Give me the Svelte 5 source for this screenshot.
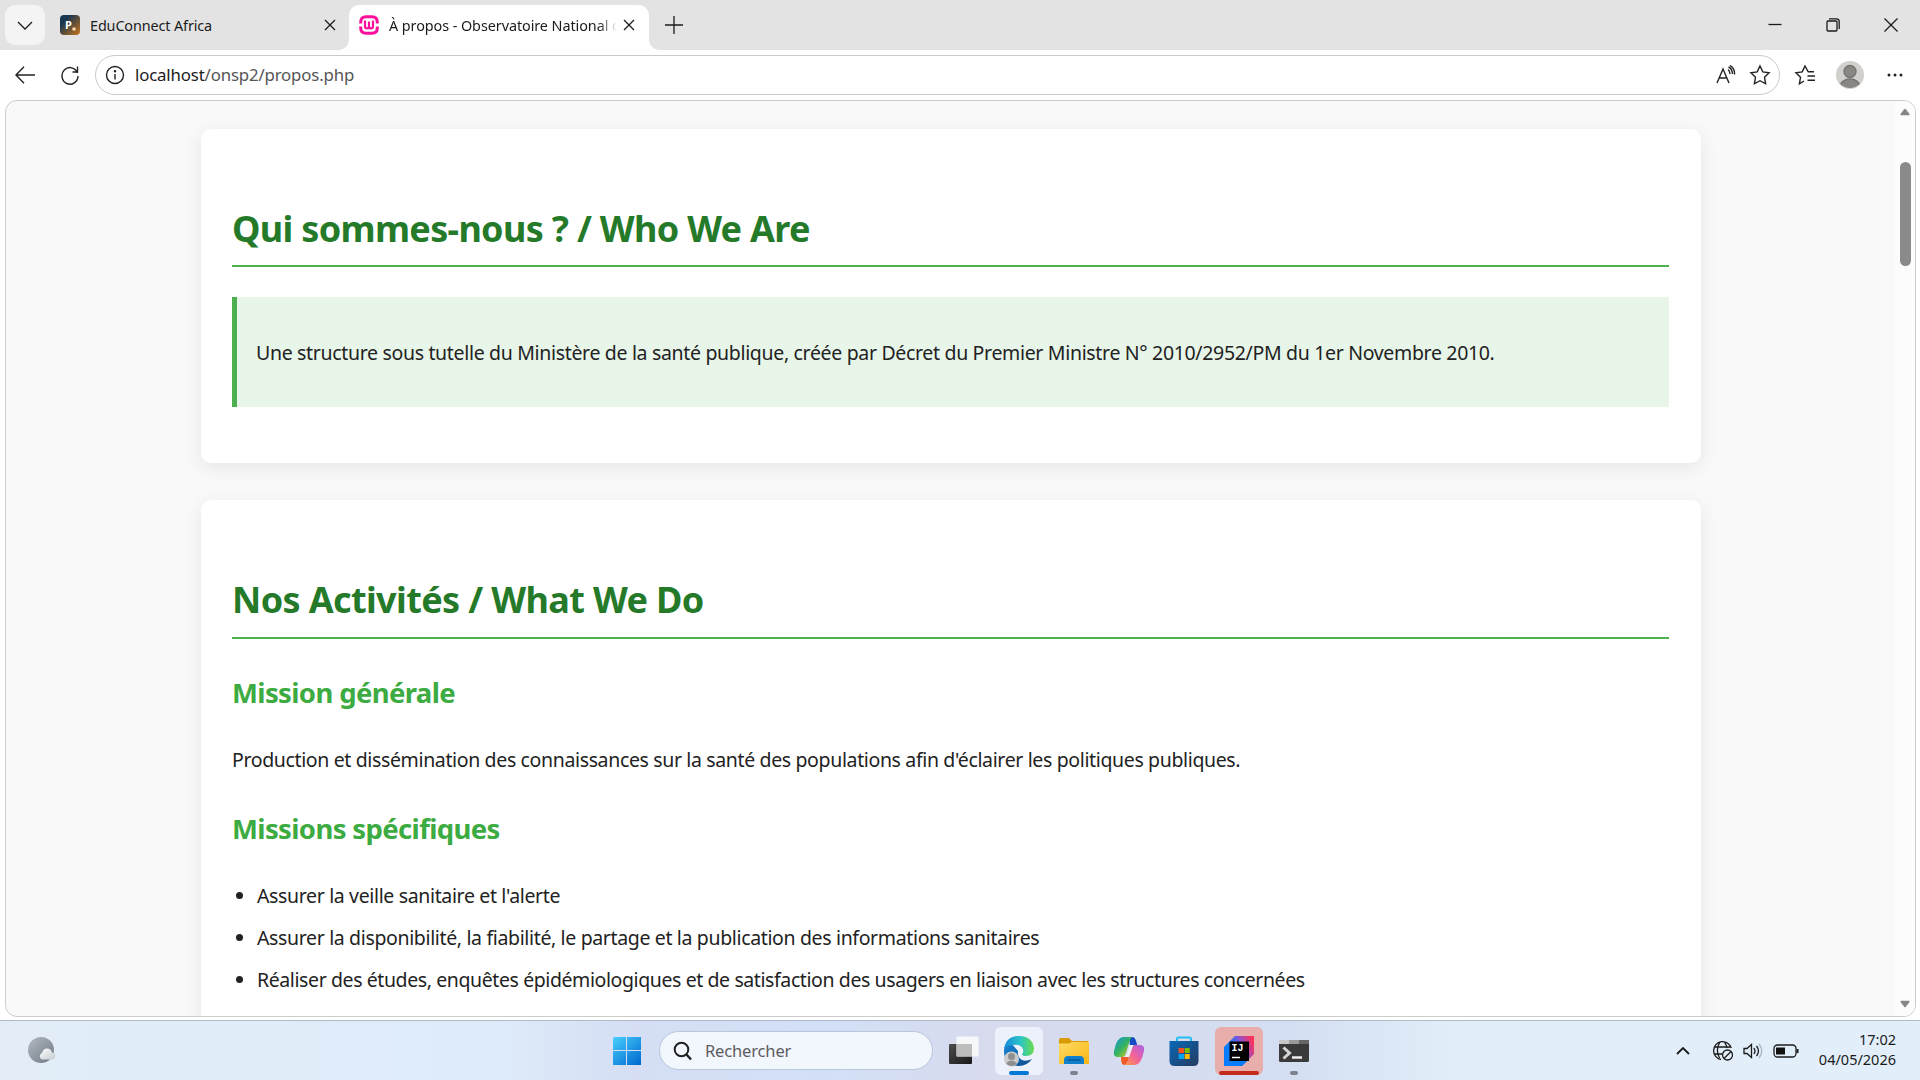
<script lang="ts">
  const missions = [
    "Assurer la veille sanitaire et l'alerte",
    "Assurer la disponibilité, la fiabilité, le partage et la publication des informations sanitaires",
    "Réaliser des études, enquêtes épidémiologiques et de satisfaction des usagers en liaison avec les structures concernées",
    "Coordonner les fonctions de collecte et de diffusion des données"
  ];
</script>

<div class="screen">
  <header class="tabstrip">
    <button class="tab-menu" aria-label="Tabs">
      <svg width="18" height="18" viewBox="0 0 18 18"><path d="M2 6l7 7 7-7" /></svg>
    </button>
    <div class="tab">
      <svg class="favicon" width="20" height="20" viewBox="0 0 20 20">
        <defs><linearGradient id="edu" x1="0" y1="0" x2="1" y2="1"><stop offset=".25" stop-color="#173650" /><stop offset="1" stop-color="#c8741c" /></linearGradient></defs>
        <rect width="20" height="20" rx="4" fill="url(#edu)" />
        <text x="5" y="14" class="fav-letter">P</text>
        <circle cx="14" cy="14" r="1.8" fill="#ffd9a8" />
      </svg>
      <span class="title">EduConnect Africa</span>
      <svg class="close" width="12" height="12" viewBox="0 0 12 12"><path d="M1 1l10 10M11 1L1 11" /></svg>
    </div>
    <div class="tab active">
      <svg class="favicon wamp" width="20" height="20" viewBox="0 0 20 20">
        <path class="ring" d="M1.700 8.500V7q0-5.300 5.300-5.300h6q5.300 0 5.300 5.300v1.500M1.700 11.500V13q0 5.300 5.300 5.300h6q5.300 0 5.300-5.300v-1.500" />
        <path class="w" d="M6 5.500V11q0 2.500 2 2.500t2-2.500V6.500V11q0 2.500 2 2.500t2-2.500V5.500" />
      </svg>
      <span class="title long">À propos - Observatoire National de la Santé</span>
      <svg class="close" width="12" height="12" viewBox="0 0 12 12"><path d="M1 1l10 10M11 1L1 11" /></svg>
    </div>
    <button class="new-tab" aria-label="New tab">
      <svg width="18" height="18" viewBox="0 0 18 18"><path d="M9 0v18M0 9h18" /></svg>
    </button>
    <div class="window-buttons">
      <svg width="14" height="14" viewBox="0 0 14 14"><path d="M0.500 6.500h13" /></svg>
      <svg width="14" height="14" viewBox="0 0 14 14"><rect x="1" y="3" width="10" height="10" rx="1" /><path d="M3 .8h7.500q2.700 0 2.700 2.700V11" /></svg>
      <svg width="14" height="14" viewBox="0 0 14 14"><path d="M.5 .5l13 13M13.500 .5l-13 13" /></svg>
    </div>
  </header>

  <nav class="toolbar">
    <svg class="back" width="20" height="18" viewBox="0 0 20 18"><path d="M20 9H1M9 .8L1 9l8 8.200" /></svg>
    <svg class="reload" width="18" height="20" viewBox="0 0 18 20"><path d="M16.500 8a8 8.300 0 1 0 .5 3M16.500 1.500V7H11.500" /></svg>
    <div class="address">
      <svg width="20" height="20" viewBox="0 0 20 20"><circle cx="10" cy="10" r="8.500" /><path d="M10 9v5.500" /><circle cx="10" cy="6.200" r=".6" fill="#222" /></svg>
      <span class="url"><b>localhost</b>/onsp2/propos.php</span>
      <svg class="read" width="20" height="20" viewBox="0 0 20 20"><path d="M1 18L7 4l6 14M3.200 13h7.600M12 4.500q2 1.500 2 4.500M12.500 2q4 2 4 7M14 .5q5 3 4.500 9" /></svg>
      <svg class="star" width="22" height="22" viewBox="0 0 22 22"><path d="M11 2l2.800 5.900 6.300.9-4.600 4.500 1.100 6.500L11 16.700l-5.600 3.100 1.100-6.500L1.900 8.800l6.300-.9z" /></svg>
    </div>
    <svg class="favs" width="22" height="22" viewBox="0 0 22 22"><path d="M20 7.800h-5.800L11 2 8.200 7.900l-6.300.9 4.600 4.500-1.100 6.500L10 17M13.500 12H21M13.500 16.200H21" /></svg>
    <svg class="avatar" width="28" height="28" viewBox="0 0 28 28"><defs><clipPath id="face"><circle cx="14" cy="14" r="13" /></clipPath></defs><circle cx="14" cy="14" r="14" fill="#d2d0cd" /><g fill="#8a8683" stroke="#777370" clip-path="url(#face)"><circle cx="14" cy="10.500" r="6" /><ellipse cx="14" cy="26" rx="10" ry="8" /></g></svg>
    <svg class="more" width="16" height="4" viewBox="0 0 16 4"><g fill="#222" stroke="none"><circle cx="2" cy="2" r="1.500" /><circle cx="8" cy="2" r="1.500" /><circle cx="14" cy="2" r="1.500" /></g></svg>
  </nav>

  <div class="viewport">
    <main>
      <section>
        <h2>Qui sommes-nous ? / Who We Are</h2>
        <div class="highlight">
          <p>Une structure sous tutelle du Ministère de la santé publique, créée par Décret du Premier Ministre N° 2010/2952/PM du 1er Novembre 2010.</p>
        </div>
      </section>
      <section>
        <h2>Nos Activités / What We Do</h2>
        <h3>Mission générale</h3>
        <p>Production et dissémination des connaissances sur la santé des populations afin d'éclairer les politiques publiques.</p>
        <h3>Missions spécifiques</h3>
        <ul>
          {#each missions as mission}
            <li>{mission}</li>
          {/each}
        </ul>
      </section>
    </main>
    <div class="scrollbar">
      <svg width="10" height="8" viewBox="0 0 10 8"><path d="M4.200 1.200q.8-1 1.600 0L9.500 6q.5 1.200-.7 1.200H1.200Q0 7.200.5 6z" /></svg>
      <div class="thumb"></div>
      <svg width="10" height="8" viewBox="0 0 10 8"><path d="M4.200 6.800q.8 1 1.600 0L9.500 2q.5-1.200-.7-1.200H1.200Q0 .8.5 2z" /></svg>
    </div>
  </div>

  <footer class="taskbar">
    <svg class="weather" width="29" height="28" viewBox="0 0 29 28">
      <defs>
        <linearGradient id="moon" x1="0" y1="0" x2="1" y2="1"><stop stop-color="#b3bac2" /><stop offset="1" stop-color="#6f7883" /></linearGradient>
        <linearGradient id="cloud" x2="1" y2="1"><stop stop-color="#fff" /><stop offset="1" stop-color="#c3cad1" /></linearGradient>
      </defs>
      <circle cx="14" cy="13" r="13" fill="url(#moon)" />
      <path d="M15 22.500a3.500 3.500 0 0 1 0-6.500q1-4.500 5-4.500t5 4q3.500.5 3.500 3.500T25 22.500z" fill="url(#cloud)" />
    </svg>
    <div class="apps">
      <div class="app start">
        <svg width="30" height="30" viewBox="0 0 30 30">
          <defs><linearGradient id="win" gradientUnits="userSpaceOnUse" x1="0" y1="0" x2="26" y2="30"><stop stop-color="#4bd3ff" /><stop offset="1" stop-color="#0069cf" /></linearGradient></defs>
          <path d="M2 1h12v13H1V2zM15 1h14v13H15zM1 15h13v14H1zM15 15h14v14H15z" fill="url(#win)" />
        </svg>
      </div>
      <div class="search">
        <svg width="20" height="20" viewBox="0 0 20 20"><circle cx="8.500" cy="8.500" r="6.800" fill="none" stroke="#222" stroke-width="2" /><path d="M13.500 13.500l4.500 5" stroke="#222" stroke-width="2.500" /></svg>
        <span>Rechercher</span>
      </div>
      <div class="app">
        <svg width="30" height="30" viewBox="0 0 30 30">
          <defs><linearGradient id="dark" x2="1" y2="1"><stop stop-color="#4c4c4c" /><stop offset="1" stop-color="#191919" /></linearGradient></defs>
          <rect x="0" y="8" width="23" height="20" rx="1" fill="url(#dark)" />
          <rect x="7.500" y=".5" width="22" height="20" rx="1" fill="#fafafa" fill-opacity=".9" />
          <path d="M7.500 8H23v12.500H7.500z" fill="#bdbdbd" />
        </svg>
      </div>
      <div class="app current">
        <svg width="32" height="32" viewBox="0 0 32 32">
          <defs>
            <linearGradient id="edgeTop" x2="1"><stop stop-color="#1689d8" /><stop offset=".55" stop-color="#2bc4c8" /><stop offset="1" stop-color="#69dd48" /></linearGradient>
            <linearGradient id="edgeLow" x2="1" y2="1"><stop stop-color="#1688d8" /><stop offset="1" stop-color="#114a8b" /></linearGradient>
          </defs>
          <path d="M1 16q0 14 15 15 8 0 13-7-6 3-10 1-5-3-4-9L8 8Q1 9 1 16z" fill="url(#edgeLow)" />
          <path d="M1 14Q3 1 16 1t15 12q0 8-8 8-4 0-4-2 2-2 1-5-3-5-9-4Q5 10 1 14z" fill="url(#edgeTop)" />
          <g fill="#8f8f8f"><circle cx="8.500" cy="24" r="7.500" fill="#ccc" /><circle cx="8.500" cy="21.500" r="3.500" /><path d="M3 28.500q5.500-6 11 0-5 5-11 0z" /></g>
        </svg>
        <i class="bar blue"></i>
      </div>
      <div class="app">
        <svg width="32" height="32" viewBox="0 0 32 32">
          <defs><linearGradient id="folder" x2="1" y2="1"><stop stop-color="#ffdc66" /><stop offset="1" stop-color="#f8b512" /></linearGradient></defs>
          <path d="M1 5q0-2 2-2h8l3 3h16l1 2v8H1z" fill="#d99b06" />
          <path d="M1 8.500h10l3-1.500h17v21q0 1-1 1H2q-1 0-1-1z" fill="url(#folder)" />
          <path d="M6 29v-4q0-4 4-4h12q4 0 4 4v4z" fill="#1180cc" /><path d="M9.500 25h13" stroke="#075798" stroke-width="1.500" />
        </svg>
        <i class="bar"></i>
      </div>
      <div class="app">
        <svg width="32" height="32" viewBox="0 0 32 32">
          <defs>
            <linearGradient id="copA" y2="1"><stop stop-color="#1792e7" /><stop offset=".5" stop-color="#33b45e" /><stop offset="1" stop-color="#f4cd17" /></linearGradient>
            <linearGradient id="copB" x1="1" x2="0" y2="1"><stop stop-color="#aa61e8" /><stop offset=".5" stop-color="#f1619b" /><stop offset="1" stop-color="#ff9d43" /></linearGradient>
          </defs>
          <path d="M16 2h3q3 0 4 4l1.500 5H17z" fill="#164cc4" />
          <path d="M10 2h9q-2 2-3 6l-3 10q-1 4-4 4H5q-5 0-4-6Q4 2 10 2z" fill="url(#copA)" />
          <path d="M22 10h5q5 0 4 6-3 14-9 14H11q3-1 4-5l4-11q1-4 3-4z" fill="url(#copB)" />
          <path d="M8 22h5l3-1q-1 8-5 9-3 0-3-8z" fill="#ef5a27" />
          <path d="M17 10h4q-2 1-3 5l-2 7h-4q2-1 3-5z" fill="#eef0fa" />
        </svg>
      </div>
      <div class="app">
        <svg width="32" height="32" viewBox="0 0 32 32">
          <defs><linearGradient id="store" x2="1" y2="1"><stop stop-color="#0868b8" /><stop offset="1" stop-color="#253a60" /></linearGradient></defs>
          <path d="M9 7V4q0-1.500 1.500-1.500h11Q23 2.500 23 4v3" fill="none" stroke="#26bdf0" stroke-width="2" />
          <path d="M1.500 6h29v20q0 5-5 5h-19q-5 0-5-5z" fill="url(#store)" />
          <path d="M10.500 13H16v5h-5.500z" fill="#f25022" /><path d="M16.700 13h5v5h-5z" fill="#7fba00" /><path d="M10.500 19H16v5h-5.500z" fill="#00a4ef" /><path d="M16.700 19h5v5h-5z" fill="#ffb900" />
        </svg>
      </div>
      <div class="app alert">
        <svg width="32" height="32" viewBox="0 0 32 32">
          <defs><linearGradient id="idea" x1="0" y1=".4" x2="1" y2="0"><stop offset=".2" stop-color="#087cfa" /><stop offset=".5" stop-color="#7757dc" /><stop offset=".9" stop-color="#fe315d" /></linearGradient></defs>
          <path d="M1 12L12 1h19v18L19 31H1z" fill="url(#idea)" /><path d="M1 12l5 14h18l-5 5H1z" fill="#087cfa" />
          <rect x="6.500" y="6.500" width="19.500" height="19.500" fill="#000" />
          <text x="8.500" y="16" class="idea-letters">IJ</text><path d="M9 22.500h8" stroke="#fff" stroke-width="1.500" />
        </svg>
        <i class="bar red"></i>
      </div>
      <div class="app">
        <svg width="32" height="32" viewBox="0 0 32 32">
          <rect x="1" y="5" width="30" height="22" rx="1.500" fill="#3a3a3a" /><path d="M1 5h10v4H1z" fill="#c6c6c6" /><path d="M11 5h10v4H11z" fill="#999" /><path d="M21 5h10v4H21z" fill="#666" />
          <path d="M5.500 12.500l6 5.500-6 5.500" fill="none" stroke="#d4d4d4" stroke-width="3" /><path d="M14 22.500h10" stroke="#eee" stroke-width="2.500" />
        </svg>
        <i class="bar"></i>
      </div>
    </div>
    <div class="tray">
      <svg class="chevron" width="14" height="8" viewBox="0 0 14 8"><path d="M1 7l6-6 6 6" stroke-width="1.800" /></svg>
      <svg class="globe" width="22" height="22" viewBox="0 0 22 22"><path d="M9 19.500A9 9 0 1 1 19.200 8M2 7h17M2 14h8M7.500 18Q3 10 8 2M12.500 2q2 2.500 2.400 6" /><circle cx="15.500" cy="15" r="5" /><path d="M12 18.500l7-7" /></svg>
      <svg class="volume" width="20" height="18" viewBox="0 0 20 18"><path d="M1 6.500v5h3l4.500 4V2.500L4 6.500zM11 6q2 3 0 6M13.500 4q4 5 0 10" /><path d="M16 2q5.500 7 0 14" stroke="#aab6c0" /></svg>
      <svg class="battery" width="26" height="14" viewBox="0 0 26 14"><rect x="1" y="1" width="22" height="12" rx="3.500" /><rect x="3" y="3.500" width="9" height="7" fill="#111" stroke="none" /><path d="M24.500 5v4" stroke-width="2" /></svg>
      <div class="clock"><span>17:02</span><span>04/05/2026</span></div>
    </div>
  </footer>
</div>

<style>
  :global(body) { margin: 0; overflow: hidden; }
  .screen { display: flex; flex-direction: column; width: 1920px; height: 1080px; overflow: hidden; background: #fff; color: #1b1b1b; font-family: "Noto Sans", "Open Sans", sans-serif; }
  svg { display: block; flex: none; }
  button { padding: 0; border: 0; background: none; }
  .tabstrip { display: flex; flex: 0 0 50px; background: #e3e3e3; }
  .tabstrip path, .window-buttons rect { fill: none; stroke: #1b1b1b; stroke-width: 1.3; }
  .tab-menu { display: grid; place-items: center; width: 40px; height: 40px; margin: 5px 0 0 5px; border-radius: 10px; background: #f4f4f4; }
  .tab { display: flex; align-items: center; box-sizing: border-box; width: 304px; height: 50px; padding: 0 13px 0 15px; font-size: 14.4px; }
  .tab .title { flex: 1; margin-left: 10px; overflow: hidden; white-space: nowrap; letter-spacing: -.12px; }
  .tab.active { position: relative; width: 300px; height: 45px; margin-top: 5px; padding: 0 14px 5px 10px; border-radius: 10px 10px 0 0; background: #fff; }
  .active::before, .active::after { position: absolute; bottom: 0; width: 10px; height: 10px; content: ""; }
  .active::before { right: 100%; background: radial-gradient(circle at 0 0, transparent 9.5px, #fff 10px); }
  .active::after { left: 100%; background: radial-gradient(circle at 100% 0, transparent 9.5px, #fff 10px); }
  .tab .long { margin-right: 6px; letter-spacing: -.07px; mask-image: linear-gradient(90deg, #000 92%, transparent); }
  .tabstrip .wamp .ring { stroke: #fb0f9c; stroke-width: 3; }
  .tabstrip .wamp .w { stroke: #fb0f9c; stroke-width: 2.2; }
  .fav-letter { fill: #fff; font: bold 11px "Noto Sans", sans-serif; }
  .idea-letters { fill: #fff; font: bold 10px "Liberation Mono", monospace; }
  .new-tab { width: 18px; margin-left: 16px; }
  .window-buttons { display: flex; align-items: center; gap: 44px; margin: 0 22px 0 auto; padding-bottom: 1px; }

  .toolbar { display: flex; flex: 0 0 50px; align-items: center; }
  .toolbar svg { fill: none; stroke: #222; stroke-width: 1.4; }
  .toolbar .avatar { stroke: none; }
  .back { margin-left: 15px; }
  .reload { margin-left: 26px; }
  .address { display: flex; align-items: center; box-sizing: border-box; width: 1685px; height: 40px; margin-left: 16px; padding: 0 8px 0 9px; border: 1px solid #cacaca; border-radius: 20px; }
  .url { flex: 1; margin: -2px 0 0 10px; font-size: 16.8px; letter-spacing: -.15px; color: #555; }
  .url b { color: #1b1b1b; font-weight: 400; }
  .star { margin-left: 13px; }
  .favs { margin-left: 14px; }
  .avatar { margin-left: 20px; }
  .more { margin-left: 23px; }

  .viewport { display: flex; box-sizing: border-box; flex: 0 0 917px; margin: 0 4px 0 5px; overflow: hidden; border: 1px solid #ccc; border-radius: 12px; background: #f9f9f9; }
  main { width: 1500px; margin: 28px 0 0 195px; color: #222; }
  section { box-sizing: border-box; height: 334px; padding: 70px 32px 0 31px; border-radius: 10px; background: #fff; box-shadow: 0 5px 19px rgb(0 0 0 / 8%); }
  section + section { height: 700px; margin-top: 37px; }
  h2 { box-sizing: border-box; height: 68px; margin: 0 0 30px; border-bottom: 2px solid #4caf50; color: #257a2a; font-size: 36px; line-height: 59px; letter-spacing: -.68px; }
  section + section h2 { height: 69px; margin-bottom: 29px; letter-spacing: -.62px; }
  h3 { margin: 0; color: #3cab41; font-size: 27.5px; line-height: 50px; letter-spacing: -.63px; }
  p { margin: 0; font-size: 19.5px; line-height: 34px; letter-spacing: -.36px; white-space: nowrap; }
  .highlight { display: flex; align-items: center; box-sizing: border-box; height: 110px; padding: 2px 0 0 19px; border-left: 5px solid #4caf50; background: #e8f5e9; }
  .highlight p { letter-spacing: -.328px; }
  section > p { margin: 25px 0 27px; }
  ul { margin: 25px 0 0; padding-left: 25px; }
  li { font-size: 19.5px; line-height: 34px; margin-bottom: 8px; letter-spacing: -.355px; white-space: nowrap; }
  li:nth-child(3) { letter-spacing: -.404px; }
  li:last-child { padding-top: 3px; }
  .scrollbar { display: flex; flex-direction: column; align-items: center; width: 20px; margin-left: auto; padding: 7px 0 8px; background: #fcfcfc; }
  .scrollbar svg { fill: #858585; }
  .thumb { width: 11px; height: 104px; margin: 46px 0 auto; border-radius: 6px; background: #8a8a8a; }

  .taskbar { display: flex; align-items: center; flex: 0 0 60px; box-sizing: border-box; margin-top: 3px; border-top: 1px solid #aebbcc; background: linear-gradient(90deg, #e2edf8 0, #deebf9 26%, #d5def4 33%, #d2e0f7 43%, #d8daed 52%, #d4def2 67%, #e2eef9 76%); }
  .weather { margin-left: 27px; }
  .apps { display: flex; align-items: center; gap: 7px; margin-left: 547px; }
  .app { position: relative; display: grid; place-items: center; width: 48px; height: 48px; border-radius: 6px; }
  .search { display: flex; align-items: center; box-sizing: border-box; width: 274px; height: 39px; padding-left: 13px; border: 1px solid #b8c6da; border-radius: 20px; background: #f2f6fd; color: #5d5d5d; font-size: 16.5px; letter-spacing: -.15px; }
  .start { margin-right: 1px; }
  .search span { margin-left: 12px; }
  .current { background: #edf1fb; }
  .alert { background: #e8aeab; }
  .bar { position: absolute; bottom: 0; left: 20px; width: 8px; height: 4px; border-radius: 2px; background: #7d828d; }
  .bar.blue { left: 14px; width: 20px; background: #0078d4; }
  .bar.red { left: 4px; width: 40px; background: #c42b1c; }
  .tray { display: flex; align-items: center; margin: 0 24px 0 auto; }
  .tray svg { fill: none; stroke: #1b1b1b; stroke-width: 1.3; }
  .globe { margin-left: 22px; }
  .volume { margin-left: 9px; }
  .battery { margin-left: 10px; }
  .clock { display: flex; flex-direction: column; align-items: flex-end; margin: 0 0 4px 20px; font-size: 14.5px; line-height: 20px; }
</style>
